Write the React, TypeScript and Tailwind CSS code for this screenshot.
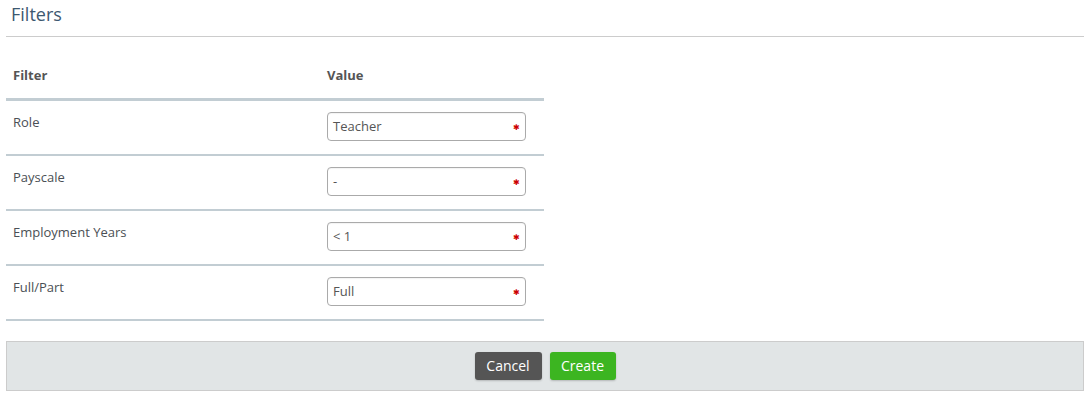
const rows = [
  { label: "Role", value: "Teacher" },
  { label: "Payscale", value: "-" },
  { label: "Employment Years", value: "< 1" },
  { label: "Full/Part", value: "Full" },
];

function RequiredInput({ value }: { value: string }) {
  return (
    <div className="flex items-center justify-between w-[199px] h-[29px] border border-[#aaaaaa] rounded-[4px] bg-white pl-[5px] pr-[5px] shadow-[inset_0_1px_1px_rgba(0,0,0,0.05)]">
      <span className="text-[13px] text-[#555]">{value}</span>
      <span className="text-[#cc0000] text-[8px] leading-none mt-[1px]">✱</span>
    </div>
  );
}

export default function App() {
  return (
    <div className="w-[1088px] h-[395px] bg-white pl-[6px] pr-[4px] font-['Open_Sans',sans-serif]">
      <div className="h-[37px] border-b border-[#cccccc] pl-[5px] pt-[1px]">
        <h1 className="text-[18px] leading-[26px] text-[#3d5870]">Filters</h1>
      </div>

      <div className="w-[538px]">
        <div className="flex items-end h-[64px] border-b-[3px] border-[#c2cdd3] pb-[13px] text-[13px] font-bold text-[#555]">
          <div className="w-[321px] pl-[7px]">Filter</div>
          <div>Value</div>
        </div>
        {rows.map((row) => (
          <div key={row.label} className="flex h-[55px] border-b-2 border-[#c2cdd3]">
            <div className="w-[321px] pl-[7px] pt-[12px] text-[13px] leading-[18px] text-[#4a4f55]">
              {row.label}
            </div>
            <div className="pt-[11px]">
              <RequiredInput value={row.value} />
            </div>
          </div>
        ))}
      </div>

      <div className="mt-[20px] h-[50px] border border-[#cccccc] bg-[#e1e5e6] flex items-center justify-center gap-[8px]">
        <button className="h-[28px] w-[67px] pb-[2px] rounded-[3px] bg-[#555555] text-white text-[14px] shadow-[0_1px_2px_rgba(0,0,0,0.2)]">
          Cancel
        </button>
        <button className="h-[28px] w-[66px] pb-[2px] rounded-[3px] bg-[#3cb521] text-white text-[14px] shadow-[0_1px_2px_rgba(0,0,0,0.2)]">
          Create
        </button>
      </div>
    </div>
  );
}
